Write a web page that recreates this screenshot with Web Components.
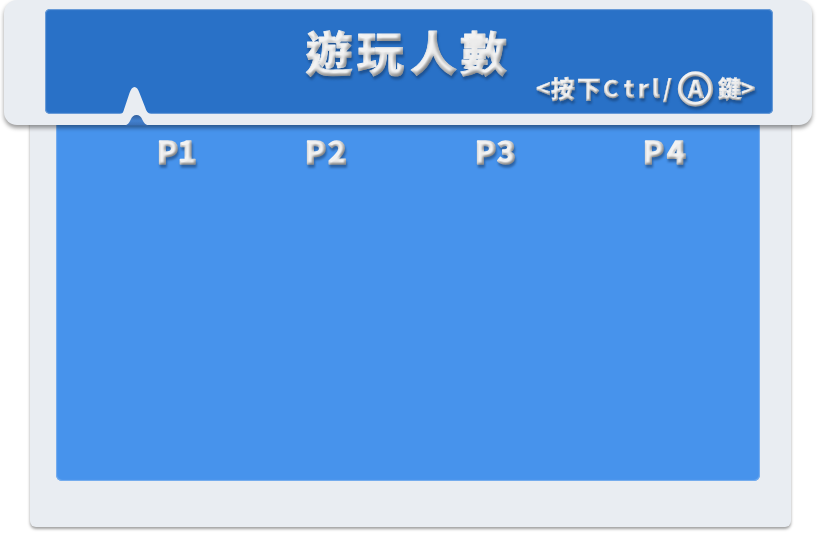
<!DOCTYPE html>
<html lang="zh-Hant">
<head>
<meta charset="utf-8">
<title>遊玩人數</title>
<style>
html,body{margin:0;background:#fff;overflow:hidden}
body{font-family:"Noto Sans CJK TC",sans-serif}
</style>
</head>
<body>
<player-screen></player-screen>
<script>
/* Embossed lettering: xs positions each glyph, size/base set the type. */
class BevelText extends HTMLElement{
  connectedCallback(){
    const a=n=>this.getAttribute(n);
    const soft=a('soft')||1.7, depth=a('depth')||3;
    this.attachShadow({mode:'open'}).innerHTML=`
    <style>
      :host{display:block;width:${a('w')}px;height:${a('h')}px}
      svg{display:block;overflow:visible}
      text{font-family:"Noto Sans CJK TC",sans-serif;font-weight:900;fill:#fff;stroke:#fff;stroke-linejoin:round;stroke-linecap:round}
    </style>
    <svg width="${a('w')}" height="${a('h')}">
      <defs><filter id="b" x="-10" y="-10" width="${+a('w')+20}" height="${+a('h')+24}" filterUnits="userSpaceOnUse" color-interpolation-filters="sRGB">
        <feGaussianBlur in="SourceAlpha" stdDeviation="${soft}" result="s"/>
        <feDiffuseLighting in="s" surfaceScale="${depth}" diffuseConstant="1.1" lighting-color="#fff" result="l"><feDistantLight azimuth="235" elevation="60"/></feDiffuseLighting>
        <feComponentTransfer in="l" result="face"><feFuncR type="linear" slope=".46" intercept=".49"/><feFuncG type="linear" slope=".46" intercept=".49"/><feFuncB type="linear" slope=".46" intercept=".49"/></feComponentTransfer>
        <feComposite in="face" in2="SourceAlpha" operator="in" result="face2"/>
        <feOffset in="SourceAlpha" dx="1" dy="${a('drop')||3}"/>
        <feGaussianBlur stdDeviation=".8" result="o"/>
        <feFlood flood-color="#12345f" flood-opacity=".5"/><feComposite in2="o" operator="in" result="sh"/>
        <feMerge><feMergeNode in="sh"/><feMergeNode in="face2"/></feMerge>
      </filter></defs>
      <g filter="url(#b)">
        <text x="${a('xs')}" y="${a('base')}" font-size="${a('size')}" stroke-width="${a('stroke')||0}">${this.textContent.replace(/</g,'&lt;').replace(/>/g,'&gt;')}</text>
        ${a('ring')?`<circle cx="${a('ring')}" cy="18" r="15.2" fill="none" stroke="#fff" stroke-width="5"/>`:''}
      </g>
    </svg>`;
  }
}
customElements.define('bevel-text',BevelText);

class TitlePanel extends HTMLElement{
  constructor(){super();this.attachShadow({mode:'open'}).innerHTML=`
  <style>
    :host{display:block;position:relative;z-index:1;box-sizing:border-box;width:808.500px;height:125px;margin-left:3.5px;padding:9px 39px 11px 41.5px;background:#e9edf2;border-radius:13px;box-shadow:0 3px 4px rgba(0,0,0,.4)}
    .well{box-sizing:border-box;width:728px;height:105px;background:#2971c7;border-radius:5px;box-shadow:inset 0 0 1px 1px #70a0d9;padding:17px 14px 0 257px}
    .sub{display:flex;justify-content:flex-end;margin-top:-11px}
    .notch{position:absolute;left:116.5px;top:84px}
  </style>
  <div class="well">
    <slot name="title"></slot>
    <div class="sub"><slot name="hint"></slot></div>
  </div>
  <svg class="notch" width="36" height="44">
    <defs><linearGradient id="n" x1="0" y1="0" x2="0" y2="1"><stop offset="0" stop-color="#315f9c"/><stop offset=".55" stop-color="#4280ce"/><stop offset="1" stop-color="#396fb5"/></linearGradient></defs>
    <path d="M0 30C3 30 3.500 27 4.500 24L9.500 9Q11.500 3 14.500 3Q17.500 3 19.500 9L25 23Q27 30 31 30Z" fill="#e9edf2"/>
    <path d="M5 41.500Q8.500 40.500 10.500 36Q12.500 31 16.500 31Q20.500 31 22.500 36Q24.500 40.500 28.500 41.500Z" fill="url(#n)"/>
  </svg>`;}
}
customElements.define('title-panel',TitlePanel);

class PlayerPanel extends HTMLElement{
  constructor(){super();this.attachShadow({mode:'open'}).innerHTML=`
  <style>
    :host{display:block;box-sizing:border-box;width:761px;height:412px;margin:-10px 0 0 30px;padding:0 31px 46px 25.500px;background:#e9edf2;border-radius:0 0 6px 6px;box-shadow:0 2px 3px rgba(0,0,0,.38)}
    .well{box-sizing:border-box;height:366px;background:#4793ec;border-radius:0 0 6px 6px;box-shadow:inset 0 0 1px 1px #79b0ef;padding:20.500px 0 0 98px;display:grid;grid-template-columns:148px 170px 168px 50px;align-content:start}
  </style>
  <div class="well"><slot></slot></div>`;}
}
customElements.define('player-panel',PlayerPanel);

class PlayerScreen extends HTMLElement{
  constructor(){super();this.attachShadow({mode:'open'}).innerHTML=`
  <style>:host{display:block;width:836px;height:535px;overflow:hidden}</style>
  <title-panel>
    <bevel-text slot="title" w="215" h="56" size="47" base="45" xs="3.500,55,108,158" stroke="0.800" soft="2" depth="4">遊玩人數</bevel-text>
    <bevel-text slot="hint" w="224" h="36" size="24" base="27" xs="1,16,42,68,89,103,117,128,153,183,206" ring="160.500" soft="1.300" depth="2.200" drop="2.500" stroke="0.400">&lt;按下Ctrl/A鍵&gt;</bevel-text>
  </title-panel>
  <player-panel>
    <bevel-text w="50" h="34" size="31" base="28" xs="3,24" stroke="1.500" drop="3">P1</bevel-text>
    <bevel-text w="50" h="34" size="31" base="28" xs="3,26" stroke="1.500" drop="3">P2</bevel-text>
    <bevel-text w="50" h="34" size="31" base="28" xs="3,25" stroke="1.500" drop="3">P3</bevel-text>
    <bevel-text w="50" h="34" size="31" base="28" xs="3,27" stroke="1.500" drop="3">P4</bevel-text>
  </player-panel>`;}
}
customElements.define('player-screen',PlayerScreen);
</script>
</body>
</html>
